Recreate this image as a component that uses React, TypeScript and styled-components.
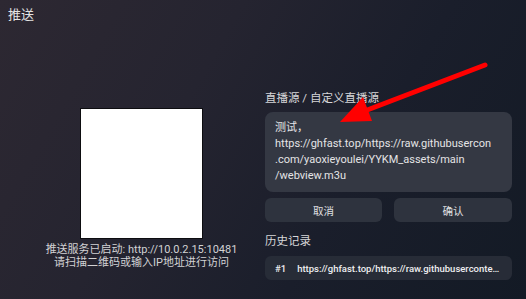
import styled, { createGlobalStyle } from "styled-components"

const GlobalStyle = createGlobalStyle`
    html, body {
        margin: 0;
        padding: 0;
        background: #1c1f29;
    }
    * {
        box-sizing: border-box;
    }
`

const Page = styled.div`
    position: relative;
    width: 526px;
    height: 299px;
    overflow: hidden;
    background: linear-gradient(120deg, #2d2832 0%, #252430 35%, #1a1e2b 65%, #131a25 100%);
    font-family: Roboto, "Noto Sans CJK SC", sans-serif;
    color: #e6e6e6;
`

const Title = styled.div`
    padding: 7px 0 0 8px;
    height: 23px;
    font-size: 13px;
    line-height: 16px;
    color: #e4e4e4;
`

const Body = styled.div`
    display: grid;
    grid-template-columns: 265px 247px;
`

const LeftColumn = styled.div`
    display: flex;
    flex-direction: column;
    align-items: center;
    padding: 85px 0 0 18px;
`

const QrBox = styled.div`
    width: 123px;
    height: 131px;
    background: #ffffff;
    border: 1px solid #0d0d10;
`

const Caption = styled.div`
    margin-top: 4px;
    font-size: 11px;
    line-height: 13px;
    color: #d2d2d4;
    text-align: center;
    white-space: nowrap;
`

const RightColumn = styled.div`
    display: flex;
    flex-direction: column;
    padding-top: 68px;
`

const Label = styled.div<{ $mt?: number }>`
    margin-top: ${(p) => p.$mt ?? 0}px;
    font-size: 11.5px;
    line-height: 14px;
    color: #d6d6d8;
`

const SourceBox = styled.div`
    margin-top: 7px;
    height: 80px;
    padding: 8px 10px 0 10px;
    border-radius: 8px;
    background: #343843;
    font-size: 11px;
    line-height: 16px;
    color: #e4e4e6;
    white-space: nowrap;
`

const ButtonRow = styled.div`
    display: grid;
    grid-template-columns: 117px 118px;
    justify-content: space-between;
    margin-top: 6px;
`

const Button = styled.div`
    height: 24px;
    display: flex;
    align-items: center;
    justify-content: center;
    border-radius: 6px;
    background: #2e333e;
    font-size: 10.5px;
    color: #e0e0e2;
`

const HistoryItem = styled.div`
    margin-top: 8px;
    height: 24px;
    display: flex;
    align-items: center;
    gap: 11px;
    padding: 0 10px;
    border-radius: 6px;
    background: #272c37;
    font-size: 9.5px;
    font-weight: 500;
    color: #eeeef0;
    white-space: nowrap;
`

const HistoryText = styled.span`
    min-width: 0;
    overflow: hidden;
    text-overflow: ellipsis;
`

const ArrowLayer = styled.svg`
    position: absolute;
    left: 0;
    top: 0;
    pointer-events: none;
`

const App = () => {
    return (
        <>
            <GlobalStyle />
            <Page>
                <Title>推送</Title>
                <Body>
                    <LeftColumn>
                        <QrBox />
                        <Caption>
                            推送服务已启动: http://10.0.2.15:10481
                            <br />
                            请扫描二维码或输入IP地址进行访问
                        </Caption>
                    </LeftColumn>
                    <RightColumn>
                        <Label>直播源 / 自定义直播源</Label>
                        <SourceBox>
                            测试，
                            <br />
                            https://ghfast.top/https://raw.githubusercon
                            <br />
                            .com/yaoxieyoulei/YYKM_assets/main
                            <br />
                            /webview.m3u
                        </SourceBox>
                        <ButtonRow>
                            <Button>取消</Button>
                            <Button>确认</Button>
                        </ButtonRow>
                        <Label $mt={12}>历史记录</Label>
                        <HistoryItem>
                            <span>#1</span>
                            <HistoryText>https://ghfast.top/https://raw.githubusercontent.com/yaoxieyoulei</HistoryText>
                        </HistoryItem>
                    </RightColumn>
                </Body>
                <ArrowLayer width="526" height="299" viewBox="0 0 526 299">
                    <line x1="485" y1="65" x2="362" y2="112" stroke="#ff0000" strokeWidth="5" strokeLinecap="round" />
                    <polygon points="340,122 363,97 372,121" fill="#ff0000" />
                </ArrowLayer>
            </Page>
        </>
    )
}

export default App
